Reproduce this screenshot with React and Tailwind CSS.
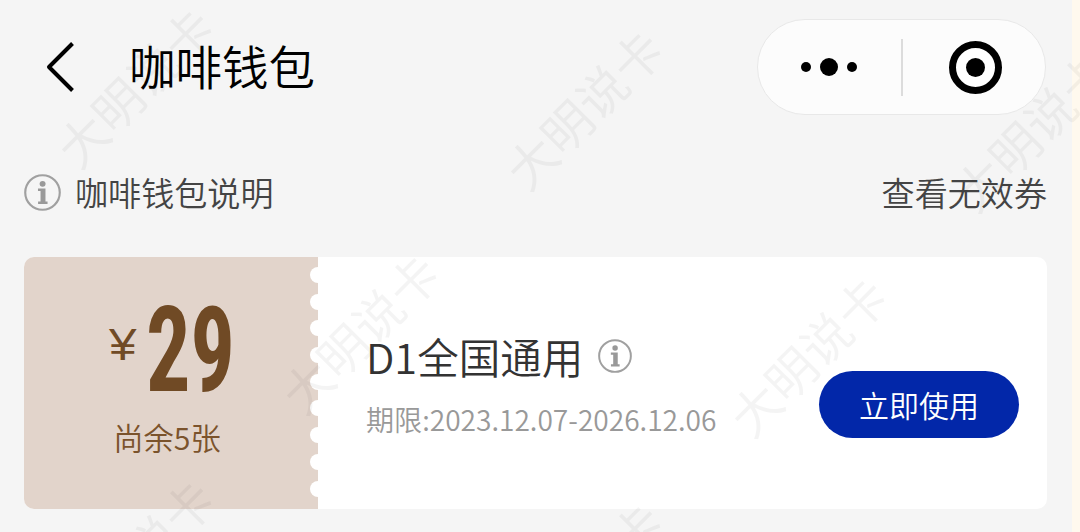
import React from 'react';

const WATERMARKS = [
    { x: 134, y: 86 },
    { x: 583, y: 108 },
    { x: 1031, y: 130 },
    { x: 359, y: 332 },
    { x: 807, y: 355 },
    { x: 134, y: 558 },
    { x: 583, y: 581 },
];

const InfoIcon = ({ className }) => (
    <svg viewBox="0 0 36 36" className={className} fill="none">
        <circle cx="18" cy="18" r="16.8" stroke="#a0a0a0" strokeWidth="2.1" />
        <circle cx="18.1" cy="9.6" r="2.9" fill="#999" />
        <path d="M13.6 14.2h7.3v12.6h2v2.4h-9.2v-2.4h2.4V16.6h-2.5z" fill="#999" />
    </svg>
);

const MiniProgramCapsule = () => (
    <div className="flex h-24 w-[289px] items-center rounded-full border border-[#e8e8e8] bg-[#fcfcfc]">
        <div className="flex w-[143px] items-center justify-center gap-[9px] pr-[2px]">
            <span className="h-[10px] w-[10px] rounded-full bg-black" />
            <span className="h-[18px] w-[18px] rounded-full bg-black" />
            <span className="h-[10px] w-[10px] rounded-full bg-black" />
        </div>
        <div className="h-[57px] w-[2px] bg-[#dcdcdc]" />
        <div className="flex flex-1 justify-center pl-[3px]">
            <span className="flex h-[53px] w-[53px] items-center justify-center rounded-full border-[7px] border-black bg-white">
                <span className="h-[19px] w-[19px] rounded-full bg-black" />
            </span>
        </div>
    </div>
);

const Header = () => (
    <header className="flex h-[134px] items-center pl-[46px] pr-[26px]">
        <svg viewBox="0 0 30 52" className="h-[52px] w-[30px]" fill="none">
            <path d="M26.5 2.5L3 26L26.5 49.5" stroke="#000" strokeWidth="4" strokeLinejoin="round" />
        </svg>
        <h1 className="ml-[53px] flex-1 pb-[3px] text-[46.5px] leading-none text-black">咖啡钱包</h1>
        <MiniProgramCapsule />
    </header>
);

const Coupon = () => (
    <section className="mr-[25px] ml-6 flex h-[252px] overflow-hidden rounded-[10px] bg-white">
        <div className="flex w-[294px] bg-[#e2d4cb]">
            <div className="flex flex-1 flex-col items-center pt-11 text-[#704a25]">
                <div className="flex h-[87px] w-[116px] items-center">
                    <span className="w-[37px] shrink-0 origin-left scale-x-[1.1] font-['Liberation_Sans',sans-serif] text-[45px] leading-none">¥</span>
                    <span className="origin-left scale-x-[0.74] pt-[12px] font-[Roboto,sans-serif] text-[119px] leading-none font-bold font-stretch-75%">29</span>
                </div>
                <p className="mt-[34px] text-[30.3px] leading-none text-[#7b532c]">尚余5张</p>
            </div>
            <div className="flex w-2 flex-col gap-[10.7px] overflow-hidden pt-[10px]">
                {Array.from({ length: 9 }).map((_, i) => (
                    <span key={i} className="h-4 w-4 shrink-0 rounded-full bg-white" />
                ))}
            </div>
        </div>

        <div className="flex flex-1 items-center pr-7 pl-12">
            <div className="flex-1">
                <div className="flex items-center gap-[15px]">
                    <h2 className="text-[41.5px] leading-[56px] text-[#333]">D1全国通用</h2>
                    <InfoIcon className="h-[34px] w-[34px]" />
                </div>
                <p className="mt-[15px] text-[28.1px] leading-[40px] text-[#999]">期限:2023.12.07-2026.12.06</p>
            </div>
            <button className="mt-[42px] h-[67px] w-[200px] rounded-full bg-[#0227a9] text-[30px] leading-none text-white">
                立即使用
            </button>
        </div>
    </section>
);

const App = () => {
    return (
        <div className="relative flex h-[532px] w-[1080px] overflow-hidden bg-[#fff9ee] font-['Noto_Sans_CJK_SC',sans-serif] font-[350]">
            <div className="w-[1072px] bg-[#f5f5f5]">
                <Header />
                <div className="flex h-[123px] items-start justify-between pt-[38px] pr-[25px] pl-6 text-[33.1px] leading-[40px] text-[#444]">
                    <div className="flex items-center gap-[14px]">
                        <InfoIcon className="h-[37px] w-[37px]" />
                        <span>咖啡钱包说明</span>
                    </div>
                    <span>查看无效券</span>
                </div>
                <Coupon />
            </div>

            {WATERMARKS.map(({ x, y }) => (
                <span
                    key={`${x}-${y}`}
                    className="pointer-events-none absolute -translate-x-1/2 -translate-y-1/2 -rotate-45 text-[49.5px] leading-none font-normal whitespace-nowrap text-black/[0.045]"
                    style={{ left: x, top: y }}
                >
                    大明说卡
                </span>
            ))}
        </div>
    );
};

export default App;
